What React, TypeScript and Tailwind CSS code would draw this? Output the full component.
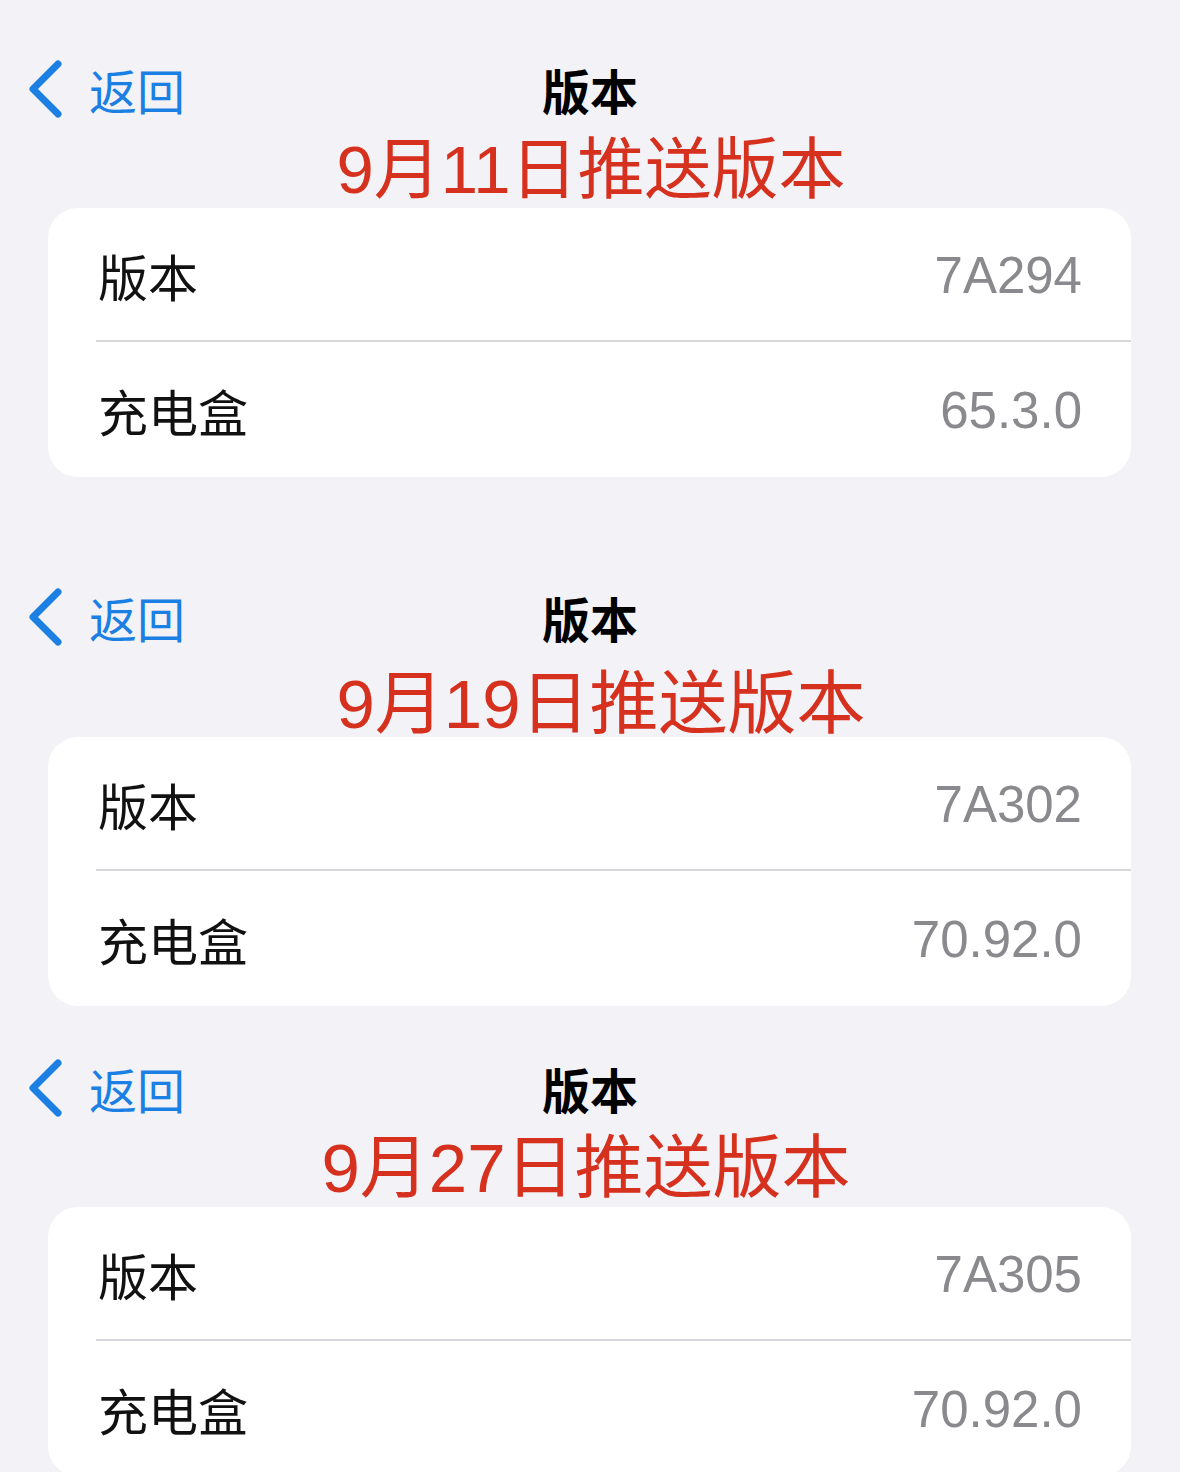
import { ReactNode } from "react";

interface Release {
  date: string;
  version: string;
  caseFw: string;
  gapTop: string;
  titleGap: string;
  cardGap: string;
  dateSize: string;
  dateShift: string;
}

const releases: Release[] = [
  { date: "9月11日推送版本", version: "7A294", caseFw: "65.3.0", gapTop: "pt-[61px]", titleGap: "mt-[19px]", cardGap: "mt-[6px]", dateSize: "text-[67px]", dateShift: "pl-[2px]" },
  { date: "9月19日推送版本", version: "7A302", caseFw: "70.92.0", gapTop: "pt-[112px]", titleGap: "mt-[26px]", cardGap: "mt-[0px]", dateSize: "text-[69px]", dateShift: "pl-[22px]" },
  { date: "9月27日推送版本", version: "7A305", caseFw: "70.92.0", gapTop: "pt-[54px]", titleGap: "mt-[19px]", cardGap: "mt-[6px]", dateSize: "text-[69px]", dateShift: "pr-[8px]" },
];

const cjk = "font-['Noto_Sans_CJK_SC','Noto_Sans',sans-serif]";
const latinCjk = "font-['Liberation_Sans','Noto_Sans_CJK_SC',sans-serif]";

function BackChevron() {
  return (
    <svg width="36" height="58" viewBox="0 0 36 58" fill="none">
      <polyline
        points="31,4 6,29 31,54"
        stroke="#1b7fe3"
        strokeWidth="7"
        strokeLinecap="round"
        strokeLinejoin="round"
      />
    </svg>
  );
}

function NavBar() {
  return (
    <div className="relative flex h-[56px] items-center">
      <div className="flex items-center pl-[27px]">
        <BackChevron />
        <span className={`ml-[26px] text-[48px] leading-none text-[#1b7fe3] ${cjk}`}>返回</span>
      </div>
      {/* centred title sits over the back button row */}
      <div className="absolute inset-0 flex items-center justify-center">
        <span className={`text-[48px] font-bold leading-none text-black ${cjk}`}>版本</span>
      </div>
    </div>
  );
}

function Row({ label, value, divider }: { label: string; value: string; divider?: boolean }) {
  return (
    <div className="relative flex h-[134px] items-center justify-between pl-[50px] pr-[49px]">
      <span className={`text-[50px] leading-none text-[#111] ${cjk}`}>{label}</span>
      <span className="font-['Liberation_Sans',Arial,sans-serif] text-[51px] leading-none text-[#8a8a8e]">{value}</span>
      {divider && <div className="absolute bottom-0 left-[48px] right-0 h-[2px] bg-[#d8d8dc]" />}
    </div>
  );
}

function Card({ children, className }: { children: ReactNode; className: string }) {
  return (
    <div className={`relative mx-[48px] w-[1083px] overflow-hidden rounded-[30px] bg-white ${className}`}>
      {children}
    </div>
  );
}

export default function App() {
  return (
    <div className="h-[1472px] w-[1180px] overflow-hidden bg-[#f2f2f7]">
      {releases.map((r) => (
        <section key={r.date} className={r.gapTop}>
          <NavBar />
          <div className={`flex h-[66px] items-center justify-center ${r.titleGap} ${r.dateShift}`}>
            <span className={`${r.dateSize} leading-none text-[#d6301e] ${latinCjk}`}>{r.date}</span>
          </div>
          <Card className={r.cardGap}>
            <Row label="版本" value={r.version} divider />
            <div className="h-[1px]" />
            <Row label="充电盒" value={r.caseFw} />
          </Card>
        </section>
      ))}
    </div>
  );
}
